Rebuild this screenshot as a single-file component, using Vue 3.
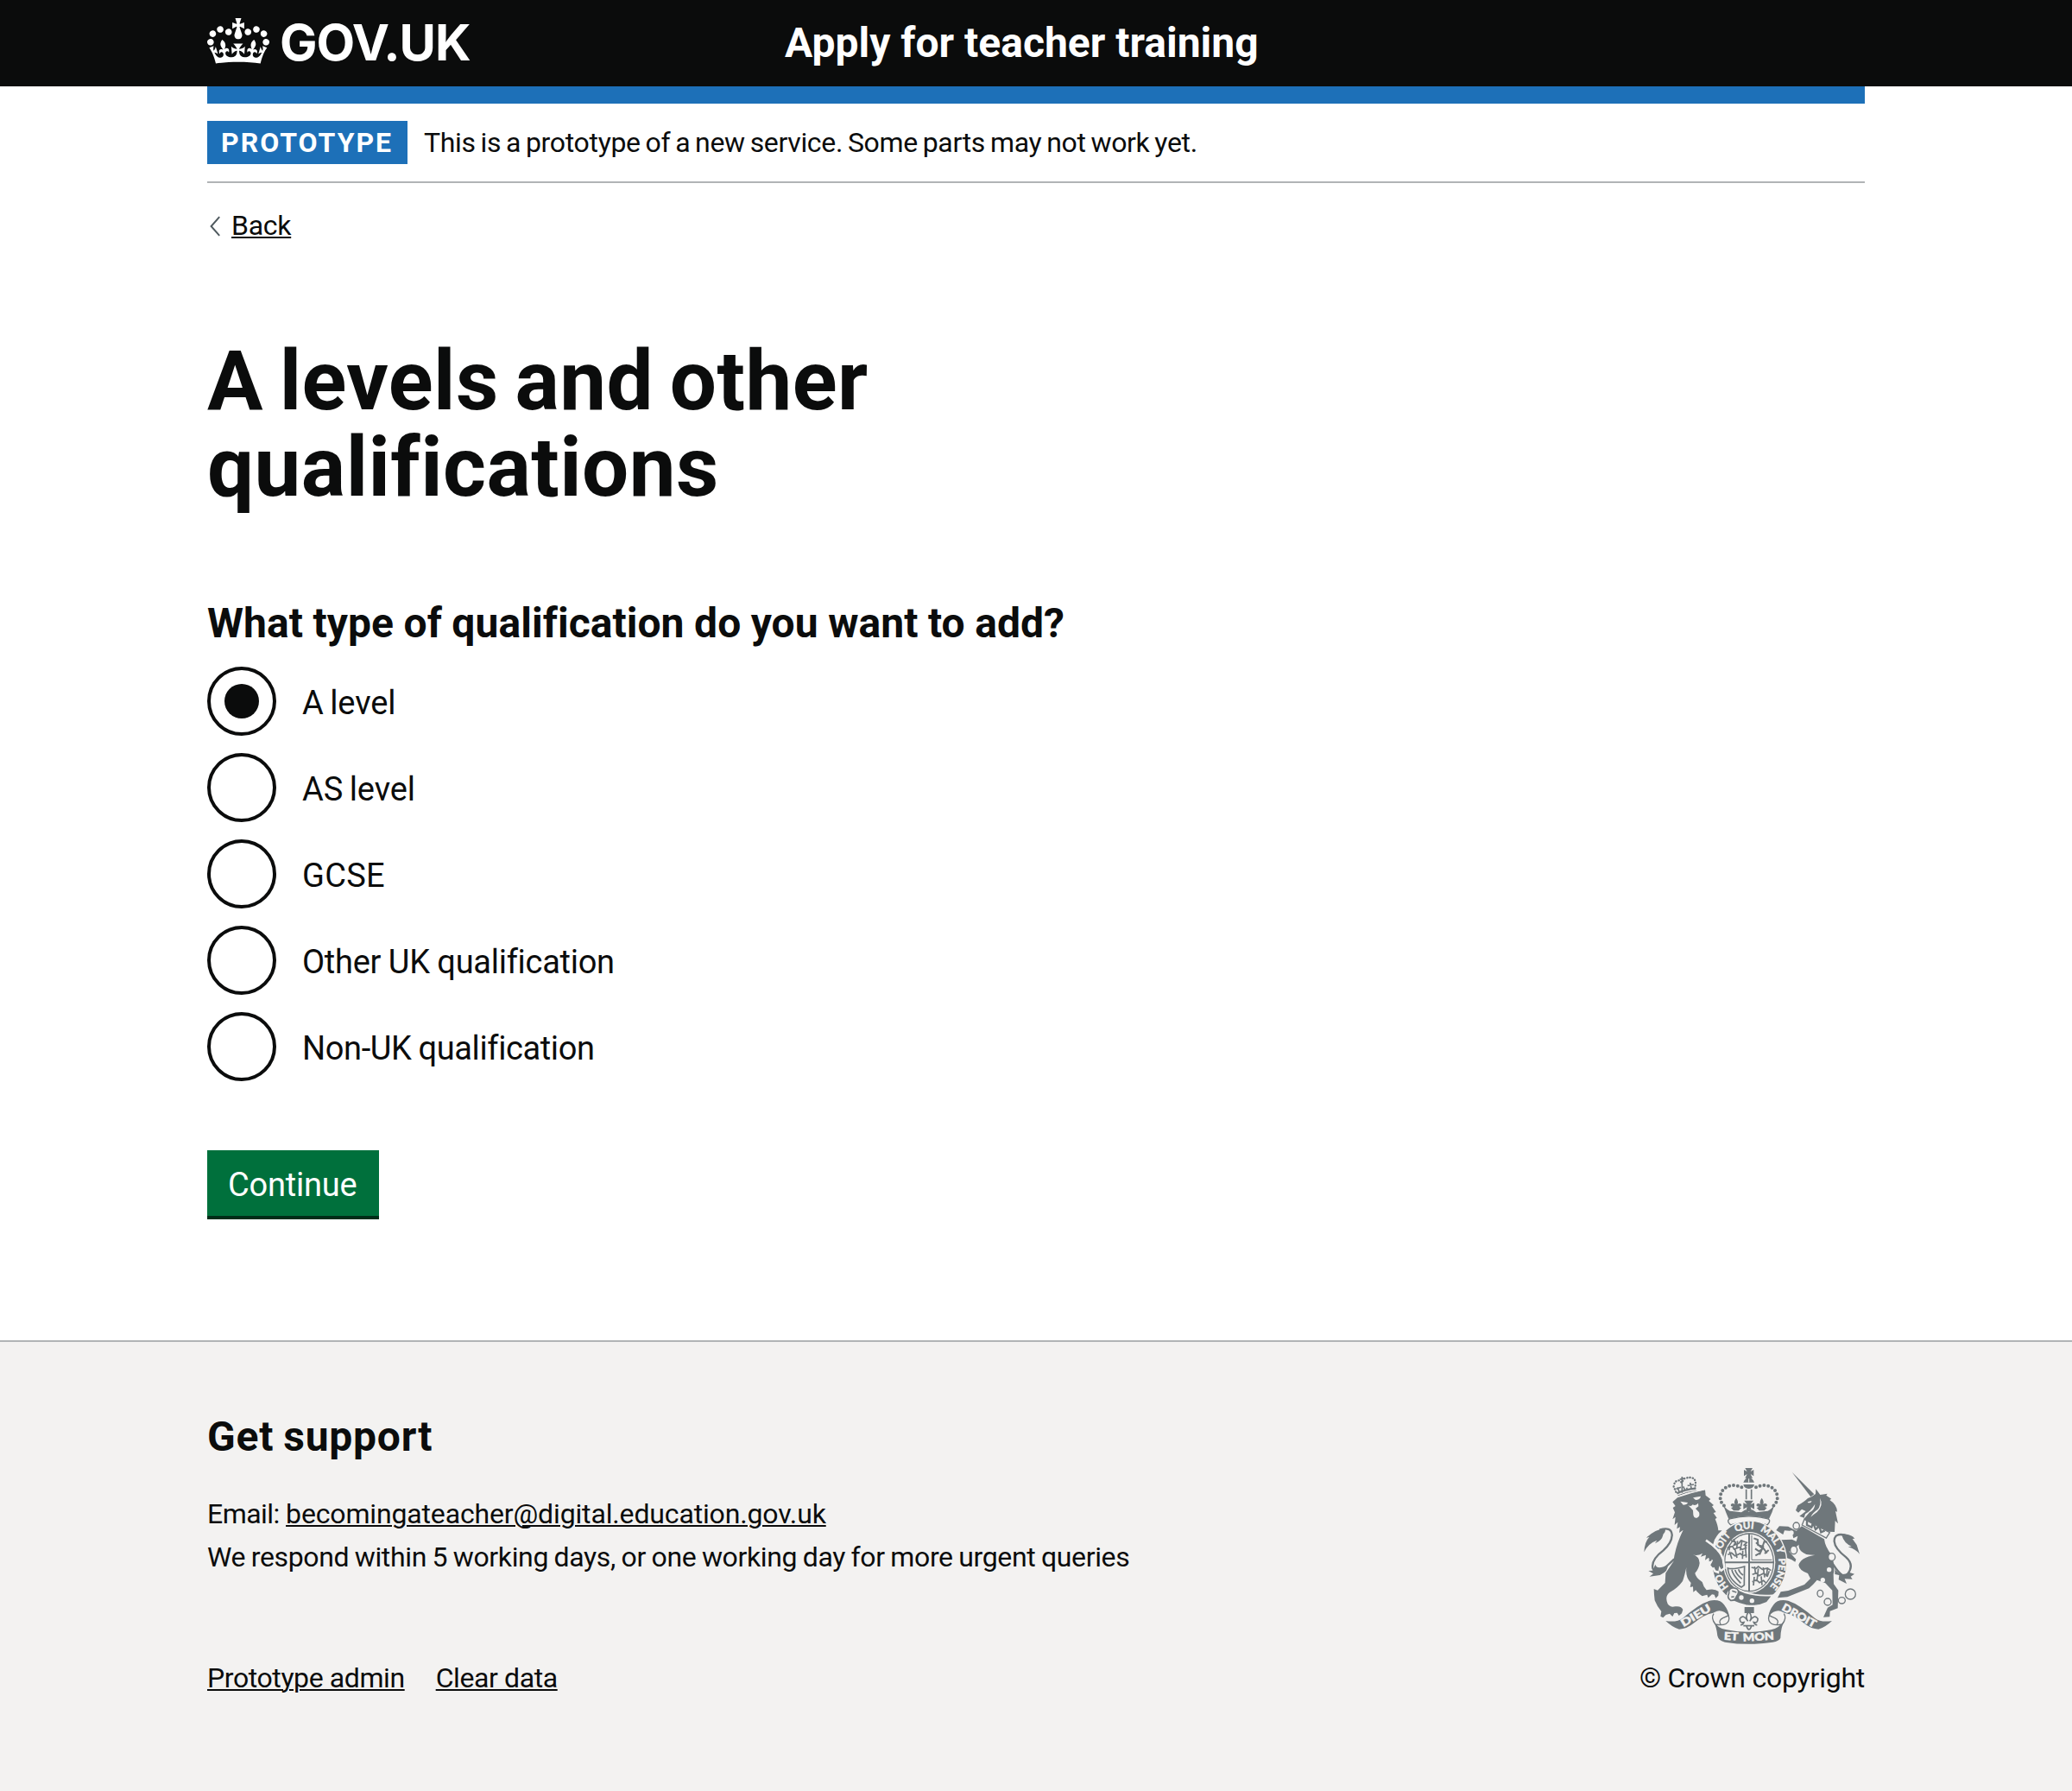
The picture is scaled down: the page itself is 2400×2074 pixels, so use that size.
<script setup>
import { ref } from 'vue'

const options = [
  { label: 'A level', tone: 'short' },
  { label: 'AS level', tone: 'short' },
  { label: 'GCSE', tone: 'caps' },
  { label: 'Other UK qualification', tone: 'long' },
  { label: 'Non-UK qualification', tone: 'longer' },
]
const selected = ref('A level')
</script>

<template>
  <div class="page">
    <header class="header">
      <div class="container header-inner">
        <div class="logo">
          <svg class="crown" viewBox="0 0 132 97" width="72" height="53" fill="currentColor" aria-hidden="true">
            <path fill-rule="evenodd" d="M25 30.2c3.5 1.5 7.7-.2 9.1-3.7 1.5-3.6-.2-7.8-3.9-9.2-3.6-1.4-7.6.3-9.1 3.9-1.4 3.5.3 7.5 3.9 9zM9 39.5c3.6 1.5 7.8-.2 9.2-3.7 1.5-3.6-.2-7.8-3.9-9.1-3.6-1.5-7.6.2-9.1 3.8-1.4 3.5.3 7.5 3.8 9zM4.4 57.2c3.5 1.5 7.7-.2 9.1-3.8 1.5-3.6-.2-7.7-3.9-9.1-3.5-1.5-7.6.3-9.1 3.8-1.4 3.5.3 7.6 3.9 9.1zm38.3-21.4c3.5 1.5 7.7-.2 9.1-3.8 1.5-3.6-.2-7.7-3.9-9.1-3.6-1.5-7.6.3-9.1 3.8-1.3 3.6.4 7.7 3.9 9.1zm64.4-5.6c-3.6 1.5-7.8-.2-9.1-3.7-1.5-3.6.2-7.8 3.8-9.2 3.6-1.4 7.7.3 9.2 3.9 1.3 3.5-.4 7.5-3.9 9zm15.9 9.3c-3.6 1.5-7.7-.2-9.1-3.7-1.5-3.6.2-7.8 3.7-9.1 3.6-1.5 7.7.2 9.2 3.8 1.5 3.5-.3 7.5-3.8 9zm4.7 17.7c-3.6 1.5-7.8-.2-9.2-3.8-1.5-3.6.2-7.7 3.9-9.1 3.6-1.5 7.7.3 9.2 3.8 1.3 3.5-.4 7.6-3.9 9.1zM89.3 35.8c-3.6 1.5-7.8-.2-9.2-3.8-1.4-3.6.2-7.7 3.9-9.1 3.6-1.5 7.7.3 9.2 3.8 1.4 3.6-.3 7.7-3.9 9.1zM69.7 17.7l8.9 4.7V9.3l-8.9 2.8c-.2-.3-.5-.6-.9-.9L72.4 0H59.6l3.5 11.2c-.3.3-.6.5-.9.9l-8.8-2.8v13.1l8.8-4.7c.3.3.6.7.9.9l-5 15.4v.1c-.2.8-.4 1.6-.4 2.4 0 4.1 3.1 7.5 7 8.1h.2c.3 0 .7.1 1 .1.4 0 .7 0 1-.1h.2c4-.6 7.1-4.1 7.1-8.1 0-.8-.1-1.7-.4-2.4V34l-5.1-15.4c.4-.2.7-.6 1-.9zM66 92.8c16.9 0 32.8 1.1 47.1 3.2 4-16.9 8.9-26.7 14-33.5l-9.6-3.4c1 4.9 1.1 7.2 0 10.2-1.5-1.4-3-4.3-4.2-8.7L108.6 76c2.8-2 5-3.2 7.5-3.3-4.4 9.4-10 11.9-13.6 11.2-4.3-.8-6.3-4.6-5.6-7.9 1-4.7 5.7-5.9 8-.5 4.3-8.7-3-11.4-7.6-8.8 7.1-7.2 7.9-13.5 2.1-21.1-8 6.1-8.1 12.3-4.5 20.8-4.7-5.4-12.1-2.5-9.5 6.2 3.4-5.2 7.9-2 7.2 3.1-.6 4.3-6.4 7.8-13.5 7.2-10.3-.9-10.9-8-11.2-13.8 2.5-.5 7.1 1.8 11 7.3L80.2 60c-4.1 4.4-8 5.3-12.3 5.4 1.4-4.4 8-11.6 8-11.6H55.5s6.4 7.2 7.9 11.6c-4.2-.1-8-1-12.3-5.4l1.4 16.4c3.9-5.5 8.5-7.7 10.9-7.3-.3 5.8-.9 12.8-11.1 13.8-7.2.6-12.9-2.9-13.5-7.2-.7-5 3.8-8.3 7.1-3.1 2.7-8.7-4.6-11.6-9.4-6.2 3.7-8.5 3.6-14.7-4.6-20.8-5.8 7.6-5 13.9 2.2 21.1-4.7-2.6-11.9.1-7.7 8.8 2.3-5.5 7.1-4.2 8.1.5.7 3.3-1.3 7.1-5.7 7.9-3.5.7-9-1.8-13.5-11.2 2.5.1 4.7 1.3 7.5 3.3l-4.7-15.4c-1.2 4.4-2.7 7.2-4.3 8.7-1.1-3-.9-5.3 0-10.2l-9.5 3.4c5 6.9 9.9 16.7 14 33.5 14.8-2.1 30.8-3.2 47.7-3.2z" />
          </svg>
          <span class="logo-text">GOV.UK</span>
        </div>
        <span class="service-name">Apply for teacher training</span>
      </div>
    </header>

    <div class="container">
      <div class="blue-bar"></div>
      <div class="phase-banner">
        <strong class="tag">PROTOTYPE</strong>
        <span class="phase-text">This is a prototype of a new service. Some parts may not work yet.</span>
      </div>

      <nav class="back">
        <svg class="chevron" width="14" height="24" viewBox="0 0 14 24" fill="none" stroke="#505a5f" stroke-width="2" aria-hidden="true">
          <path d="M12.2 1.2 2.6 12l9.6 10.8" />
        </svg>
        <a class="link">Back</a>
      </nav>

      <main>
        <h1>A levels and other qualifications</h1>

        <form @submit.prevent>
          <h2 class="question">What type of qualification do you want to add?</h2>
          <div class="radios">
            <label v-for="o in options" :key="o.label" class="radio" @click="selected = o.label">
              <span class="dial" :class="{ on: selected === o.label }"></span>
              <span class="radio-label" :class="o.tone">{{ o.label }}</span>
            </label>
          </div>
          <button class="button" type="submit">Continue</button>
        </form>
      </main>
    </div>

    <footer class="footer">
      <div class="container footer-inner">
        <div class="support">
          <h2 class="support-title">Get support</h2>
          <p class="contact"><span class="email-label">Email: </span><a class="link email">becomingateacher@digital.education.gov.uk</a></p>
          <p class="respond">We respond within 5 working days, or one working day for more urgent queries</p>
          <div class="footer-links">
            <a class="link">Prototype admin</a>
            <a class="link">Clear data</a>
          </div>
        </div>
        <div class="copyright">
          <svg class="arms" viewBox="69 60 750 612" width="250" height="204" fill="#6f777b" aria-hidden="true">
            <defs>
              <path id="garter-line" d="M438 505A103 117 0 0 1 438 271A103 117 0 0 1 438 505" />
              <path id="fleur" d="M0-22Q-10-8-4 0Q-16-8-19 3Q-17 9-11 7Q-12 13-18 12L-9 22H9L18 12Q12 13 11 7Q17 9 19 3Q16-8 4 0Q10-8 0-22Z" />
            </defs>

            <!-- lion -->
            <g>
              <g fill="none" stroke="#6f777b">
                <path d="M184 143 176 125Q178 103 195 103L204 111L211 98Q232 88 248 98L252 110L250 132" stroke-width="7" stroke-linecap="round" stroke-dasharray="1 9" />
                <path d="M205 90V146M197 99L214 96M189 127L196 144M233 111L238 134M184 133L201 127M224 121L246 117M209 124L216 138M221 128L224 138" stroke-width="5" />
                <path d="M187 148Q215 135 252 131" stroke-width="7" />
                <path d="M190 156Q218 143 256 139" stroke-width="3" />
              </g>
              <path d="M172 178 189 163Q233 147 285 136L287 155 304 168 298 174 315 189 309 193 323 213 314 216 326 233 320 237Q330 260 331 277L344 277Q316 300 312 328L333 352Q348 375 348 410L340 412 333 402 331 418 321 414 320 402 312 407 305 397 313 380 299 385 299 370 285 380 288 362 270 368 276 356Q260 366 242 361Q265 367 266 390 264 410 250 425 252 440 275 456L281 472 290 484Q318 477 332 489L331 503 322 512 317 500 309 499 296 511 292 500 275 505Q257 492 253 484L244 491 243 472 233 474 236 459Q216 440 220 405 213 437 207 453 190 477 162 492 144 505 155 532 165 546 181 541Q203 538 208 552L204 565 194 573 188 563 178 564 172 576 162 566 149 570 139 580 130 575 133 558 120 540 110 520 108 500 107 480 120 485Q135 470 146 459L148 425 175 385Q182 330 209 275L195 285 198 265 187 271 190 248 179 258 182 230 172 238 180 214 173 198 182 192Z" />
              <path fill="#f3f2f1" d="M199 176 225 180Q222 188 209 188ZM243 163 270 158Q267 171 252 171ZM226 189Q236 196 242 187 252 192 261 182L262 193 252 201 264 214Q269 228 257 233 247 236 244 223L243 207Z" />
              <path d="M184 161Q230 143 286 134" fill="none" stroke="#f3f2f1" stroke-width="3" />
              <path d="M73 352Q75 316 91 300L81 302Q112 272 148 269 148 282 139 291 137 311 111 322L118 311Q88 321 73 352Z" />
              <path d="M127 275Q167 262 170 291 171 318 140 346 97 378 103 408 111 427 142 410L178 376" fill="none" stroke="#6f777b" stroke-width="7" />
              <path d="M112 395Q118 416 155 396 159 418 128 432L92 437 105 427 88 417 103 416Z" />
            </g>

            <!-- unicorn -->
            <g>
              <path d="M587 74 664 151 652 160Z" />
              <path d="M655 160 669 150 670 133 685 153 710 149 706 155 724 167 718 171Q743 187 744 212L738 210 747 253 737 243 735 282 714 281 628 237 648 214Q666 205 667 185 653 208 633 220L629 233 613 227 635 210 621 203 609 215 600 207 607 190Q630 177 642 165Z" />
              <path d="M641 178 655 174Q655 182 643 181ZM684 164Q698 189 674 213 660 223 652 230 657 217 676 204 689 190 684 164Z" fill="#f3f2f1" />
              <path d="M630 238 622 258 706 303 718 284Z" fill="#f3f2f1" stroke="#6f777b" stroke-width="4" />
              <path d="M639 242V258L655 266 660 250 669 273 682 262 688 283 701 277" fill="none" stroke="#6f777b" stroke-width="7" />
              <path d="M621 262 699 307Q702 334 724 361 738 399 731 429L732 463 748 485 746 547 719 557 718 577 696 578 711 545 728 535 727 485 703 460 674 449 Q660 466 646 478L571 508 537 511 548 490 574 486 630 465 651 444 642 426Q612 416 610 397 620 365 686 360 664 365 637 360 607 347 611 326L600 335 577 350 601 377 598 386 585 378 568 372 553 345 554 324 547 310 587 308 602 315 607 296 592 304 586 279 561 277 556 291 532 276 543 262 574 263 602 278Z" />
              <g fill="#f3f2f1">
                <circle cx="585" cy="285" r="8" /><circle cx="716" cy="413" r="8" /><circle cx="694" cy="449" r="8" />
              </g>
              <g fill="#f3f2f1" stroke="#6f777b" stroke-width="4">
                <ellipse cx="602" cy="261" rx="11" ry="12" /><ellipse cx="593" cy="345" rx="12" ry="14" />
                <ellipse cx="725" cy="369" rx="12" ry="13" /><ellipse cx="685" cy="496" rx="10" ry="12" />
                <circle cx="711" cy="525" r="12" /><ellipse cx="760" cy="520" rx="12" ry="11" /><circle cx="790" cy="498" r="18" />
              </g>
              <path d="M772 293Q733 284 734 315 736 340 775 370 805 397 780 429 765 445 739 408L724 386" fill="none" stroke="#6f777b" stroke-width="7" />
              <path d="M759 289Q795 290 805 305L797 306 812 327 822 359Q809 342 782 334L794 332Q766 321 759 289ZM736 410Q753 440 785 422L804 428 791 437 797 446 770 445 777 462 749 448 751 432 736 429Z" />
            </g>

            <!-- imperial crown -->
            <g>
              <path d="M424 60H450L443 72 454 66V88L443 81 450 95H424L431 81 420 88V66L431 72ZM418 110Q425 94 437 94 449 94 456 110ZM418 117H456Q454 131 437 132 420 131 418 117Z" />
              <path d="M437 97V110" stroke="#f3f2f1" stroke-width="3" />
              <g fill="none" stroke="#6f777b" stroke-width="12" stroke-linecap="round" stroke-dasharray="0 14.5">
                <path d="M412 127C375 109 336 129 338 166Q339 180 352 192" />
                <path d="M462 127C499 109 538 129 536 166Q535 180 522 192" />
              </g>
              <path d="M428 134V169M446 134V169" fill="none" stroke="#6f777b" stroke-width="5" />
              <path d="M348 188Q365 211 379 210L411 214 425 205 437 212 449 205 463 214 495 210Q509 211 526 188 520 211 507 237 437 216 367 237 356 211 348 188Z" />
              <use href="#fleur" x="393" y="186" /><use href="#fleur" x="482" y="186" />
              <path d="M421 173H453L443 187 456 181V203L443 196 448 211H426L431 196 418 203V181L431 187Z" />
              <path d="M374 236Q437 219 500 236 513 238 507 250L501 258Q437 236 374 258L367 250Q361 239 374 236Z" fill="#f3f2f1" stroke="#6f777b" stroke-width="4" />
            </g>

            <!-- garter and shield -->
            <ellipse cx="439" cy="389" rx="130" ry="146" stroke="#f3f2f1" stroke-width="4" />
            <ellipse cx="438" cy="388" rx="91" ry="106" fill="#f3f2f1" />
            <g fill="none" stroke="#6f777b">
              <ellipse cx="438" cy="388" rx="85" ry="100" stroke-width="4" />
              <path d="M438 287V490M352 388H524" stroke-width="6" />
              <path d="M447 293V379H517" stroke-width="3" />
              <path d="M375 311l16 7-6 10 17-6 8-10 20 7-9 8 10 2M362 337l18-5 6 10 18-7 10 8 16-6M364 361l13-6 12 10 18-8 10 8 13-5M384 306l8 18M372 330l-4 16M398 313l-3 25M414 310l-7 36M389 342l7 30M370 350l8 25M416 347l-1 29M424 322l4 49" stroke-width="5" />
              <path d="M454 304l14 5 1 19 16 4 6-17 10 3M459 340l13 9 16-10 12 17M488 330l-14 31M475 356l-15 8M462 319l24 22M492 357l14-12" stroke-width="6" />
              <path d="M446 405l16 4 8-7 14 10 18-4 12 8M449 430l14-5 9 9 16-8 15 9M449 455l15-6 10 9 14-7 9 8M457 402l3 22M470 409l-5 45M487 405l5 35M502 407l-4 30M480 436l3 31M456 438l-3 30M508 418l-7 20" stroke-width="5" />
              <path d="M364 408Q381 414 422 402 421 436 421 467L411 474Q366 447 364 408ZM378 414Q381 431 409 460M389 414Q394 430 413 445M401 412Q405 425 417 432" stroke-width="5" />
            </g>
            <g class="motto garter-text">
              <text><textPath href="#garter-line" startOffset="80">HO</textPath></text>
              <text><textPath href="#garter-line" startOffset="200">SOIT</textPath></text>
              <text><textPath href="#garter-line" startOffset="298">QUI</textPath></text>
              <text><textPath href="#garter-line" startOffset="384">MAL</textPath></text>
              <text><textPath href="#garter-line" startOffset="467">Y</textPath></text>
              <text><textPath href="#garter-line" startOffset="505">PENSE</textPath></text>
            </g>
            <path d="M288 311Q338 345 347 375L352 408 341 416 333 404 330 422 319 418 313 406" fill="none" stroke="#f3f2f1" stroke-width="8" />
            <path d="M286 316Q334 345 343 377L348 406 341 412 334 400 331 418 321 414 318 400 311 406 304 397 313 380 296 372Z" />
            <path d="M387 474Q436 508 520 502L500 527Q467 543 427 537 401 532 376 520 355 509 366 490Z" fill="#6f777b" stroke="#f3f2f1" stroke-width="5" />
            <path d="M384 476Q365 477 368 495 360 512 374 520 390 521 394 506 407 490 396 480Z" fill="#f3f2f1" stroke="#6f777b" stroke-width="5" />
            <path d="M379 487 394 492M376 508 386 507" fill="none" stroke="#6f777b" stroke-width="5" />
            <circle cx="411" cy="510" r="8" fill="#f3f2f1" /><circle cx="448" cy="521" r="8" fill="#f3f2f1" />

            <!-- ribbons -->
            <path d="M422 543H455V564H422Z" />
            <path d="M437 559Q422 577 434 592 417 566 406 583 405 600 420 596 416 606 408 605M437 559Q452 577 440 592 457 566 468 583 469 600 454 596 458 606 466 605M418 608H456M429 610Q438 632 446 610" fill="#f3f2f1" stroke="#6f777b" stroke-width="5" />
            <g id="ribbon">
              <path d="M148 591Q187 597 208 581 263 533 300 521 337 514 351 535 366 555 369 575 347 551 326 557L313 563Q279 570 247 598 221 620 195 620 172 614 148 591Z" />
              <path d="M315 566Q304 582 321 603 359 610 367 590 373 575 354 556M340 605Q329 590 347 581 362 576 367 571" fill="none" stroke="#6f777b" stroke-width="4" />
            </g>
            <use href="#ribbon" transform="matrix(-1 0 0 1 874 0)" />
            <path d="M313 588Q330 620 360 622 437 637 514 622 542 617 562 588 548 612 547 650 543 661 520 665 437 678 354 665 332 661 328 643 325 612 313 588Z" />
            <g class="motto">
              <text transform="translate(210 613) rotate(-31)" textLength="115" lengthAdjust="spacingAndGlyphs">DIEU</text>
              <text transform="translate(350 656) rotate(3)" textLength="50" lengthAdjust="spacingAndGlyphs">ET</text>
              <text transform="translate(417 662) rotate(-3)" textLength="108" lengthAdjust="spacingAndGlyphs">MON</text>
              <text transform="translate(549 552) rotate(29)" textLength="130" lengthAdjust="spacingAndGlyphs">DROIT</text>
            </g>
          </svg>
          <span class="copyright-text">© Crown copyright</span>
        </div>
      </div>
    </footer>
  </div>
</template>

<style>
body { background: #fff; }
</style>

<style scoped>
.page {
  display: flex;
  flex-direction: column;
  min-height: 2074px;
  color: #0b0c0c;
  font-family: Roboto, "Liberation Sans", sans-serif;
  font-size: 32px;
  letter-spacing: -0.28px;
  font-variant-ligatures: none;
}
.container { width: 1920px; margin: 0 auto; }
h1, h2, p { margin: 0; }
.link { text-decoration: underline; text-decoration-thickness: 2px; text-underline-offset: 2px; }

.header { background: #0b0c0c; color: #fff; }
.header-inner { display: flex; height: 100px; }
.logo { display: flex; width: 669px; }
.crown { margin-top: 21px; }
.logo-text {
  margin-left: 12px;
  padding-top: 9px;
  font: 700 58px/80px Inter, sans-serif;
  letter-spacing: -1.1px;
}
.service-name { padding-top: 20px; font-size: 48px; font-weight: 700; line-height: 59px; letter-spacing: 0; }

.blue-bar { height: 20px; background: #1d70b8; }
.phase-banner { display: flex; gap: 19px; padding: 20px 0; border-bottom: 2px solid #b1b4b6; line-height: 50px; }
.tag { box-sizing: border-box; width: 232px; padding-left: 16px; background: #1d70b8; color: #fff; letter-spacing: 2px; }
.phase-text { letter-spacing: -0.33px; word-spacing: -1.75px; }

.back { display: flex; margin-top: 29px; line-height: 40px; }
.chevron { margin: 9px 12px 0 2px; }

h1 { width: 1280px; margin-top: 110px; font-size: 96px; line-height: 100px; letter-spacing: 0.45px; word-spacing: -5.5px; }

.question { margin-top: 101px; font-size: 48px; line-height: 59px; letter-spacing: 0.05px; word-spacing: -0.5px; }
.radios { display: flex; flex-direction: column; gap: 20px; margin-top: 21px; }
.radio { display: flex; height: 80px; }
.dial {
  display: flex;
  align-items: center;
  justify-content: center;
  box-sizing: border-box;
  width: 80px;
  height: 80px;
  border: 4px solid #0b0c0c;
  border-radius: 50%;
}
.dial.on::after { content: ""; width: 40px; height: 40px; border-radius: 50%; background: #0b0c0c; }
.radio-label { padding: 17px 0 0 30px; font-size: 38px; line-height: 50px; }
.short { letter-spacing: -0.1px; word-spacing: -1.8px; }
.caps { letter-spacing: 0.3px; }
.long { letter-spacing: -0.28px; word-spacing: -0.5px; }
.longer { letter-spacing: -0.38px; word-spacing: -1px; }

.button {
  display: block;
  width: 199px;
  height: 80px;
  margin-top: 80px;
  padding: 15px 0 11px 24px;
  border: 0;
  border-bottom: 4px solid #002d18;
  background: #00703c;
  color: #fff;
  font: 400 38px/50px Roboto, sans-serif;
  letter-spacing: -0.2px;
  text-align: left;
}

.footer { flex: 1; margin-top: 140px; border-top: 2px solid #b1b4b6; background: #f3f2f1; }
.footer-inner { display: flex; justify-content: space-between; padding-top: 80px; }
.support-title { font-size: 48px; line-height: 59px; letter-spacing: 0.75px; word-spacing: -1.5px; }
.contact { margin-top: 35px; line-height: 50px; }
.email-label { letter-spacing: -0.55px; }
.email { letter-spacing: -0.15px; }
.respond { line-height: 50px; letter-spacing: -0.36px; word-spacing: -1px; }
.footer-links { display: flex; gap: 36px; margin-top: 95px; line-height: 40px; letter-spacing: -0.41px; }
.copyright { display: flex; flex-direction: column; align-items: center; margin-top: 66px; width: 261px; }
.arms { margin-left: -3px; overflow: visible; }
.copyright-text { margin-top: 19px; line-height: 40px; letter-spacing: -0.22px; white-space: nowrap; }
.motto { fill: #f3f2f1; stroke: #f3f2f1; stroke-width: 1.5px; font: 900 37px Lato, sans-serif; letter-spacing: 0; }
.garter-text { font-size: 34px; font-weight: 700; }
</style>
